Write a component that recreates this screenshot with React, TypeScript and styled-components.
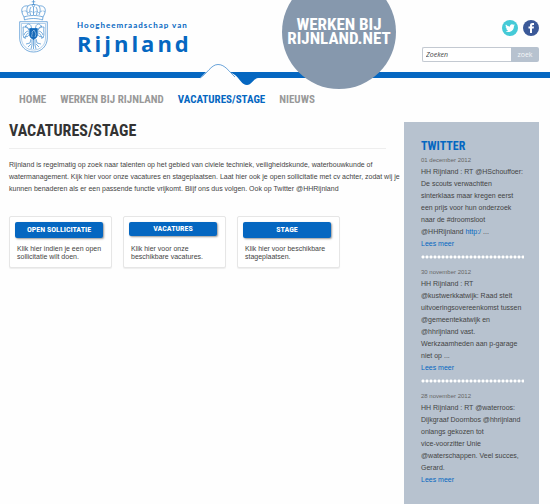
import React from 'react';
import styled, { createGlobalStyle } from 'styled-components';

const blue = '#0567c1';
const slate = '#8698ad';
const pale = '#b7c2cf';
const heading = '"Roboto Condensed", "Liberation Sans Narrow", "Roboto", sans-serif';

const GlobalStyle = createGlobalStyle`
  * { box-sizing: border-box; }
  body {
    margin: 0;
    background: #fefefe;
    color: #444;
    font: 7px/12px "Liberation Sans", Arial, sans-serif;
  }
  h1, h2, p, ul { margin: 0; padding: 0; }
  a { color: inherit; text-decoration: none; }
`;

const Page = styled.div`
  min-height: 100vh;
  overflow: hidden;
`;

const Header = styled.header`
  position: relative;
`;

const HeaderTop = styled.div`
  display: flex;
  justify-content: space-between;
  height: 64px;
  padding: 0 11px 0 19px;
`;

const Logo = styled.a`
  display: flex;
  gap: 28px;
`;

const LogoText = styled.span`
  display: flex;
  flex-direction: column;
  padding-top: 20px;
  color: ${blue};
`;

const LogoSmall = styled.span`
  font-family: "Lato", sans-serif;
  font-size: 8px;
  font-weight: 700;
  line-height: 10px;
  letter-spacing: 1px;
`;

const LogoLarge = styled.span`
  font-family: "Open Sans", sans-serif;
  font-size: 22px;
  font-weight: 700;
  line-height: 26px;
  letter-spacing: 3px;
`;

const Tools = styled.div`
  display: flex;
  flex-direction: column;
  align-items: flex-end;
  gap: 11px;
  padding-top: 20px;
`;

const Social = styled.div`
  display: flex;
  gap: 5px;
  height: 16px;
`;

const SocialLink = styled.a`
  display: block;
  width: 16px;
  height: 16px;
  svg { display: block; }
`;

const Search = styled.form`
  display: flex;
  flex: none;
  width: 117px;
  height: 15px;
`;

const SearchInput = styled.input`
  flex: 1;
  min-width: 0;
  padding: 0 3px;
  border: 1px solid #c3c9d1;
  border-right: 0;
  border-radius: 2px 0 0 2px;
  background: #fff;
  color: #444;
  font: italic 7px "Open Sans", sans-serif;
  &::placeholder { color: #444; opacity: 1; }
`;

const SearchButton = styled.button`
  width: 28px;
  padding: 0;
  border: 0;
  border-radius: 0 2px 2px 0;
  background: ${pale};
  color: #f4f6f8;
  font: 7px "Open Sans", sans-serif;
`;

const Ribbon = styled.div`
  display: flex;
  svg { flex: none; display: block; }
`;

const Bar = styled.span<{ $lead?: boolean }>`
  flex: ${p => (p.$lead ? '0 0 200px' : '1')};
  height: 6px;
  margin-top: 8px;
  background: ${blue};
`;

const Disc = styled.a`
  position: absolute;
  top: -25px;
  left: 282px;
  display: flex;
  align-items: center;
  justify-content: center;
  width: 114px;
  height: 114px;
  padding-bottom: 2px;
  border-radius: 50%;
  background: ${slate};
  && { color: #fff; }
  font: 700 17px/14px ${heading};
  text-align: center;
`;

const Nav = styled.nav`
  display: flex;
  gap: 14px;
  padding: 5px 19px 0;
  font: 700 11px/14px ${heading};
`;

const NavLink = styled.a<{ $active?: boolean }>`
  && { color: ${p => (p.$active ? blue : '#999')}; }
`;

const Columns = styled.div`
  display: flex;
  gap: 18px;
  align-items: flex-start;
  padding: 15px 11px 0 9px;
`;

const Main = styled.main`
  flex: 1;
  min-width: 0;
`;

const Title = styled.h1`
  padding-bottom: 8px;
  border-bottom: 1px solid #eee;
  color: #333;
  font: 700 16px/18px ${heading};
`;

const Intro = styled.p`
  padding: 10px 0 21px;
  white-space: nowrap;
`;

const Cards = styled.div`
  display: flex;
  gap: 11px;
`;

const Card = styled.section`
  width: 103px;
  min-height: 52px;
  padding: 5px 8px 5px 5px;
  border: 1px solid #e6e6e6;
  border-radius: 2px;
  background: #fff;
  box-shadow: 0 1px 1px #eee;
`;

const CardButton = styled.a<{ $short?: boolean }>`
  display: block;
  border-radius: 2px;
  background: ${blue};
  box-shadow: 1px 1px 2px #999;
  && { color: #fff; }
  font: 700 8px/${p => (p.$short ? 14 : 16)}px ${heading};
  text-align: center;
`;

const CardText = styled.p<{ $short?: boolean }>`
  padding: ${p => (p.$short ? 9 : 7)}px 0 0 2px;
  line-height: 8px;
  white-space: nowrap;
`;

const Sidebar = styled.aside`
  flex: 0 0 135px;
  padding: 17px 15px 20px 17px;
  background: ${pale};
  white-space: nowrap;
`;

const SideTitle = styled.h2`
  color: ${blue};
  font: 700 12px/15px ${heading};
`;

const Tweet = styled.article`
  & + & {
    margin-top: 5px;
    padding-top: 11px;
    background: radial-gradient(circle, #fff 0 1px, transparent 2px) 0 0 / 4px 4px repeat-x;
  }
`;

const TweetDate = styled.time`
  display: block;
  color: #666;
  font-size: 6px;
  line-height: 12px;
`;

const TweetLink = styled.a`
  && { color: ${blue}; }
`;

const Crest = () => (
  <svg width="30" height="54" viewBox="0 0 30 54" fill="none" stroke="#418bce" strokeWidth="0.7">
    <path d="M14.5 0v5M12.7 1.8h3.6" />
    <circle cx="14.5" cy="5.5" r="1.2" />
    <path d="M5 17C0 9 4 5 9 6c2-2 9-2 11 0 5-1 9 3 4 11M5 17c5-2 14-2 19 0M5.500 20c5-2 13-2 18 0M5 17l.5 3M24 17l-.5 3M9 6c-2 3-1 7 0 9M20 6c2 3 1 7 0 9M14.500 7v8M12 7c-2 3-1 5-.5 8M17 7c2 3 1 5 .5 8" />
    <path strokeDasharray="1 .7" d="M3 12c3-2 5-1 6 1 2-2 4-2 5.500 0 2-2 4-2 5.500 0 2-2 4-3 6-1" />
    <path d="M.7 21.700h27.600V38c0 8-6 14-13.800 14S.7 46 .7 38z" />
    <path strokeWidth="0.4" d="M2.500 23.500h24V38c0 7-5 12-12 12s-12-5-12-12z" />
    <path d="M12.500 29c0-3-1-5-3-5-2 .2-2 2-3.500 2.500 2 0 3 1 4 3M16.500 29c0-3 1-5 3-5 2 .2 2 2 3.500 2.500-2 0-3 1-4 3M10 30c-2-3-4-3-6-3 1 4-1 7 1 11 1-2 2-2 3-1 1-2 2-2 3-2M19 30c2-3 4-3 6-3-1 4 1 7-1 11-1-2-2-2-3-1-1-2-2-2-3-2M10 31c-2 0-4 1-5 4M10 33c-2 0-3 2-4 6M19 31c2 0 4 1 5 4M19 33c2 0 3 2 4 6M12 39l-1 4-4 1m5 0-3 3M17 39l1 4 4 1m-5 0 3 3M14.500 39v10M13 40v5l-1 4M16 40v5l1 4" />
    <path d="M10.700 28.500h7.600v6.500c0 3-3.800 4.500-3.800 4.500s-3.800-1.500-3.800-4.500z" fill="#1769b7" stroke={blue} />
    <path d="M13 37c-1-2 1-3 0-5l2-2 1 2 1 2-1 3" stroke="#a8ccec" />
  </svg>
);

const Wave = () => (
  <svg width="62" height="24" viewBox="200 64 62 24">
    <path d="M200 72h6l-6 6zM230 72h32v6h-4c-4 0-6 7-11 7s-7-6-12-10z" fill={blue} />
    <path d="M200 78C207 74 211 64.500 218 64.500s11 7 17 12.500" fill="#fefefe" stroke={blue} strokeWidth="0.6" />
  </svg>
);

const Twitter = () => (
  <svg width="16" height="16" viewBox="0 0 16 16">
    <circle cx="8" cy="8" r="8" fill="#45cad7" />
    <path transform="translate(3.300 3.300) scale(.4)" fill="#fff" d="M23.950 4.570a10 10 0 0 1-2.820.780 4.960 4.960 0 0 0 2.160-2.730 9.900 9.900 0 0 1-3.120 1.190 4.920 4.920 0 0 0-8.380 4.480C7.690 8.100 4.070 6.130 1.640 3.160a4.920 4.920 0 0 0 1.520 6.570 4.900 4.900 0 0 1-2.230-.610v.060a4.920 4.920 0 0 0 3.950 4.830 5 5 0 0 1-2.210.080 4.940 4.940 0 0 0 4.600 3.420A9.870 9.870 0 0 1 0 19.540a14 14 0 0 0 7.550 2.210c9.050 0 14-7.500 14-13.980 0-.210 0-.420-.020-.630a9.940 9.940 0 0 0 2.420-2.570z" />
  </svg>
);

const Facebook = () => (
  <svg width="16" height="16" viewBox="0 0 16 16">
    <circle cx="8" cy="8" r="8" fill="#3b5998" />
    <path fill="#fff" d="M7 13V8.500H5.500v-2H7V5.500C7 3.700 8 3 9.300 3H11v2H9.800c-.5 0-.8.2-.8.700v.8h2l-.3 2H9V13z" />
  </svg>
);

const navItems = ['HOME', 'WERKEN BIJ RIJNLAND', 'VACATURES/STAGE', 'NIEUWS'];

const cards = [
  { label: 'OPEN SOLLICITATIE', lines: ['Klik hier indien je een open', 'sollicitatie wilt doen.'] },
  { label: 'VACATURES', lines: ['Klik hier voor onze', 'beschikbare vacatures.'], short: true },
  { label: 'STAGE', lines: ['Klik hier voor beschikbare', 'stageplaatsen.'] },
];

const tweets = [
  {
    date: '01 december 2012',
    lines: ['HH Rijnland : RT @HSchouffoer:', 'De scouts verwachtten', 'sinterklaas maar kregen eerst', 'een prijs voor hun onderzoek', 'naar de #droomsloot'],
    last: <>@HHRijnland <TweetLink href="#">http:/</TweetLink> ...</>,
  },
  {
    date: '30 november 2012',
    lines: ['HH Rijnland : RT', '@kustwerkkatwijk: Raad stelt', 'uitvoeringsovereenkomst tussen', '@gemeentekatwijk en', '@hhrijnland vast.', 'Werkzaamheden aan p-garage'],
    last: 'niet op ...',
  },
  {
    date: '28 november 2012',
    lines: ['HH Rijnland : RT @waterroos:', 'Dijkgraaf Doornbos @hhrijnland', 'onlangs gekozen tot', 'vice-voorzitter Unie', '@waterschappen. Veel succes,'],
    last: 'Gerard.',
  },
];

const Lines = ({ items }: { items: string[] }) => (
  <>{items.map(line => <React.Fragment key={line}>{line}<br /></React.Fragment>)}</>
);

export default function App() {
  return (
    <Page>
      <GlobalStyle />
      <Header>
        <HeaderTop>
          <Logo href="#">
            <Crest />
            <LogoText>
              <LogoSmall>Hoogheemraadschap van</LogoSmall>
              <LogoLarge>Rijnland</LogoLarge>
            </LogoText>
          </Logo>
          <Tools>
            <Social>
              <SocialLink href="#" aria-label="Twitter"><Twitter /></SocialLink>
              <SocialLink href="#" aria-label="Facebook"><Facebook /></SocialLink>
            </Social>
            <Search onSubmit={e => e.preventDefault()}>
              <SearchInput type="text" placeholder="Zoeken" aria-label="Zoeken" />
              <SearchButton type="submit">zoek</SearchButton>
            </Search>
          </Tools>
        </HeaderTop>
        <Ribbon>
          <Bar $lead />
          <Wave />
          <Bar />
        </Ribbon>
        <Disc href="#">WERKEN BIJ<br />RIJNLAND.NET</Disc>
      </Header>
      <Nav>
        {navItems.map(item => (
          <NavLink key={item} href="#" $active={item === 'VACATURES/STAGE'}>{item}</NavLink>
        ))}
      </Nav>
      <Columns>
        <Main>
          <Title>VACATURES/STAGE</Title>
          <Intro>
            Rijnland is regelmatig op zoek naar talenten op het gebied van civiele techniek, veiligheidskunde, waterbouwkunde of<br />
            watermanagement. Kijk hier voor onze vacatures en stageplaatsen. Laat hier ook je open sollicitatie met cv achter, zodat wij je<br />
            kunnen benaderen als er een passende functie vrijkomt. Blijf ons dus volgen. Ook op Twitter @HHRijnland
          </Intro>
          <Cards>
            {cards.map(card => (
              <Card key={card.label}>
                <CardButton href="#" $short={card.short}>{card.label}</CardButton>
                <CardText $short={card.short}><Lines items={card.lines} /></CardText>
              </Card>
            ))}
          </Cards>
        </Main>
        <Sidebar>
          <SideTitle>TWITTER</SideTitle>
          {tweets.map(tweet => (
            <Tweet key={tweet.date}>
              <TweetDate>{tweet.date}</TweetDate>
              <p><Lines items={tweet.lines} />{tweet.last}</p>
              <TweetLink href="#">Lees meer</TweetLink>
            </Tweet>
          ))}
        </Sidebar>
      </Columns>
    </Page>
  );
}
